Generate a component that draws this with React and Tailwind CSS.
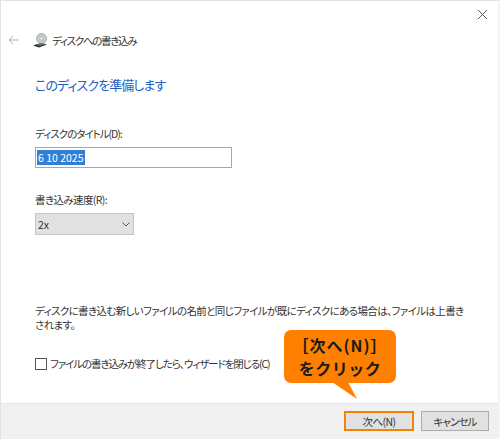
const font = "font-['Noto_Sans_CJK_JP','Noto_Sans',sans-serif] [font-feature-settings:'palt']";

const DiscIcon = () => (
  <svg width="15" height="15" viewBox="0 0 15 15">
    <path d="M0 12.5 L8 10 L14 11.5 L6 14.5 Z" fill="#2f2f2f" />
    <circle cx="8.5" cy="5.5" r="5" fill="#c4cfc8" stroke="#8f9a94" strokeWidth="0.7" />
    <circle cx="8.5" cy="5.5" r="1.6" fill="#f4f6f4" stroke="#8f9a94" strokeWidth="0.5" />
    <path d="M2 11.5 L8 10.5 L13 11 L7 13 Z" fill="#5f6a64" />
  </svg>
);

const App = () => {
  return (
    <div className={`${font} relative flex h-[440px] w-[500px] flex-col overflow-hidden border-t border-r-2 border-b border-l border-t-[#e3e3e3] border-r-[#f4f4f4] border-b-white border-l-[#e3e3e3] bg-white text-[10.5px] leading-[15px] text-[#333]`}>
      <div className="flex h-[29px] shrink-0 justify-end pt-[8px] pr-[10px]">
        <svg width="11" height="11" viewBox="0 0 11 11" stroke="#555" strokeWidth="1" fill="none">
          <path d="M1 1 L10 10 M10 1 L1 10" />
        </svg>
      </div>

      <div className="flex h-[20px] shrink-0 items-center pl-[7px]">
        <svg width="11" height="10" viewBox="0 0 11 10" stroke="#b5b5b5" strokeWidth="1" fill="none">
          <path d="M11 5 L1 5 M5 1 L1 5 L5 9" />
        </svg>
        <div className="ml-[14px]"><DiscIcon /></div>
        <span className="ml-[4px] tracking-[-1.3px]">ディスクへの書き込み</span>
      </div>

      <div className="flex min-h-0 flex-1 flex-col pr-[30px] pl-[34px]">
        <h1 className="mt-[25px] text-[13px] leading-[20px] font-normal tracking-[-0.9px] text-[#1f5fbf]">このディスクを準備します</h1>
        <label className="mt-[31px] block tracking-[-1px]">ディスクのタイトル(D):</label>
        <div className="mt-[6px] flex h-[21px] w-[197px] items-center border border-[#7ab2e0] pl-[1px]">
          <span className="bg-[#2f7fd6] px-[1px] text-[10.5px] text-white">6 10 2025</span>
        </div>
        <label className="mt-[24px] block tracking-[-0.6px]">書き込み速度(R):</label>
        <div className="mt-[6px] flex h-[22px] w-[99px] items-center justify-between border border-[#c4c4c4] bg-[#e1e1e1] pr-[3px] pl-[2px]">
          <span>2x</span>
          <svg width="8" height="5" viewBox="0 0 8 5" stroke="#555" strokeWidth="1" fill="none">
            <path d="M0.5 0.5 L4 4 L7.5 0.5" />
          </svg>
        </div>
        <p className="mt-[69px] leading-[14px] tracking-[-0.63px] whitespace-nowrap">
          ディスクに書き込む新しいファイルの名前と同じファイルが既にディスクにある場合は、ファイルは上書き
          <br />
          されます。
        </p>
        <div className="mt-[24px] flex items-center gap-[3px]">
          <span className="h-[12px] w-[12px] shrink-0 border border-[#555] bg-white" />
          <span className="tracking-[-1.1px]">ファイルの書き込みが終了したら、ウィザードを閉じる(C)</span>
        </div>
      </div>

      <div className="flex h-[36px] shrink-0 items-start justify-end gap-[7px] border-t border-[#e6e6e6] bg-[#f0f0f0] pt-[7px] pr-[9px]">
        <button className="flex h-[20px] w-[70px] items-center justify-center border-2 border-[#f58200] bg-[#e1e1e1] tracking-[-0.6px] text-[#333]">次へ(N)</button>
        <button className="flex h-[20px] w-[68px] items-center justify-center border border-[#adadad] bg-[#e1e1e1] tracking-[-0.9px] text-[#333]">キャンセル</button>
      </div>

      <div className="absolute top-[329px] left-[283px] flex h-[53px] w-[112px] flex-col items-center justify-center rounded-[7px] bg-[#ff8000] text-[16px] leading-[23px] font-bold text-[#1a1a1a] [font-feature-settings:normal]">
        <span className="tracking-[1px]">［次へ(N)］</span>
        <span className="tracking-[0.5px]">をクリック</span>
        <svg width="30" height="18" viewBox="0 0 30 18" className="absolute top-[52px] left-[48px]" fill="#ff8000">
          <path d="M0 0 L16 0 L25 17 Z" />
        </svg>
      </div>
    </div>
  );
};

export default App;
